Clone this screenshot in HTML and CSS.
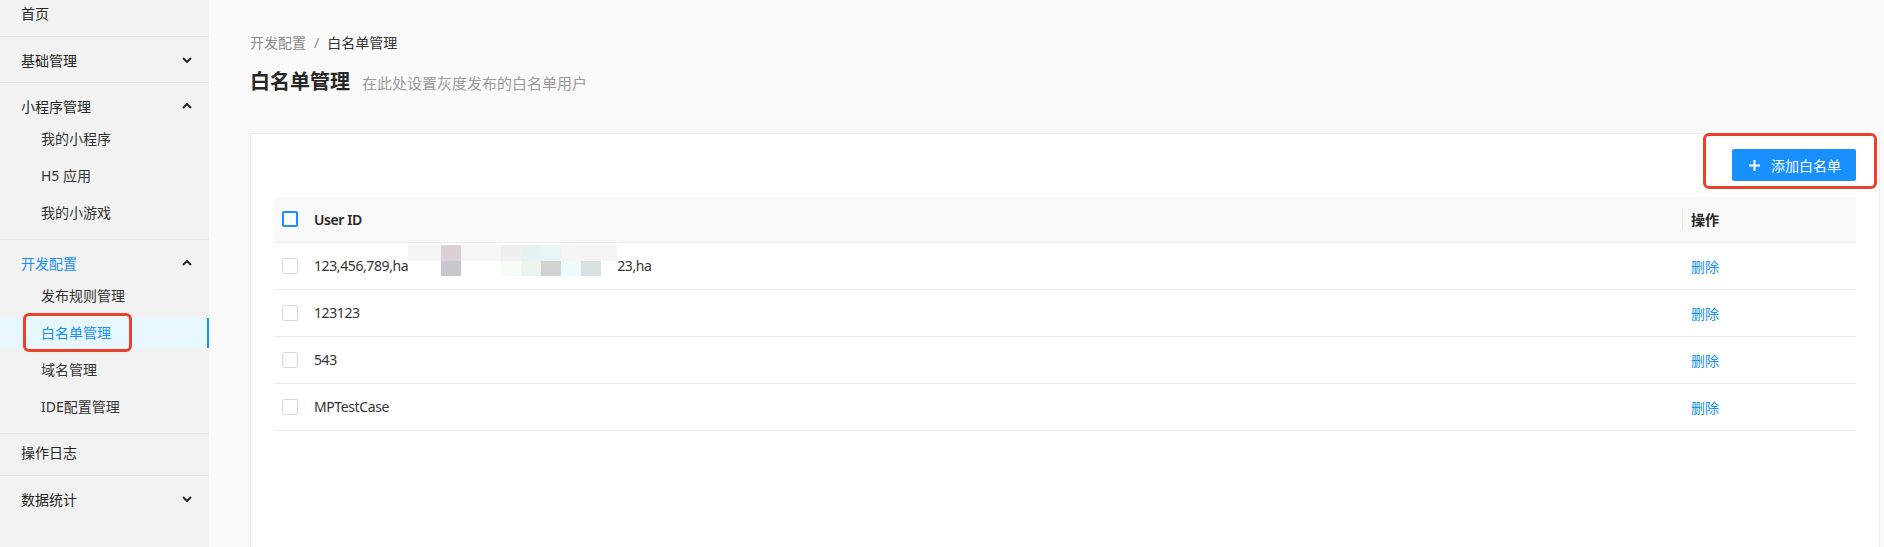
FILE: index.html
```html
<!DOCTYPE html>
<html lang="zh-CN">
<head>
    <meta charset="UTF-8">
    <meta name="viewport" content="width=device-width, initial-scale=1.0">
    <title>白名单管理</title>
    <link rel="stylesheet" href="styles.css">
</head>
<body>
<div class="layout">
    <aside class="sider">
        <ul class="menu">
            <li class="menu-item">首页</li>
            <li class="submenu">
                <div class="submenu-title">基础管理
                    <svg class="arrow" width="10" height="6" viewBox="0 0 10 6"><path d="M1 1l4 4 4-4"/></svg>
                </div>
            </li>
            <li class="submenu open">
                <div class="submenu-title">小程序管理
                    <svg class="arrow" width="10" height="6" viewBox="0 0 10 6"><path d="M1 5l4-4 4 4"/></svg>
                </div>
                <ul class="sub">
                    <li>我的小程序</li>
                    <li>H5 应用</li>
                    <li>我的小游戏</li>
                </ul>
            </li>
            <li class="submenu open active">
                <div class="submenu-title">开发配置
                    <svg class="arrow" width="10" height="6" viewBox="0 0 10 6"><path d="M1 5l4-4 4 4"/></svg>
                </div>
                <ul class="sub">
                    <li>发布规则管理</li>
                    <li class="selected">白名单管理<span class="mark mark-side"></span></li>
                    <li>域名管理</li>
                    <li>IDE配置管理</li>
                </ul>
            </li>
            <li class="menu-item">操作日志</li>
            <li class="submenu last">
                <div class="submenu-title">数据统计
                    <svg class="arrow" width="10" height="6" viewBox="0 0 10 6"><path d="M1 1l4 4 4-4"/></svg>
                </div>
            </li>
        </ul>
    </aside>

    <main class="content">
        <div class="breadcrumb">
            <span>开发配置</span><span class="sep">/</span><span class="current">白名单管理</span>
        </div>
        <div class="page-header">
            <h1>白名单管理</h1>
            <span class="desc">在此处设置灰度发布的白名单用户</span>
        </div>

        <div class="card">
            <div class="toolbar">
                <div class="btn-wrap">
                    <button class="btn-primary">
                        <svg width="11" height="11" viewBox="0 0 11 11"><path d="M5.5 0v11M0 5.5h11"/></svg>
                        添加白名单
                    </button>
                    <span class="mark mark-btn"></span>
                </div>
            </div>

            <table>
                <thead>
                    <tr>
                        <th class="col-check"><span class="checkbox head"></span></th>
                        <th>User ID</th>
                        <th class="col-op">操作</th>
                    </tr>
                </thead>
                <tbody>
                    <tr>
                        <td class="col-check"><span class="checkbox"></span></td>
                        <td>
                            <div class="uid">123,456,789,ha<span class="mosaic">
                                <i></i><i></i><i></i><i></i><i></i><i></i><i></i><i></i><i></i>
                                <i></i><i></i><i></i><i></i><i></i><i></i><i></i><i></i><i></i>
                            </span>23,ha</div>
                        </td>
                        <td class="col-op"><a href="#">删除</a></td>
                    </tr>
                    <tr>
                        <td class="col-check"><span class="checkbox"></span></td>
                        <td>123123</td>
                        <td class="col-op"><a href="#">删除</a></td>
                    </tr>
                    <tr>
                        <td class="col-check"><span class="checkbox"></span></td>
                        <td>543</td>
                        <td class="col-op"><a href="#">删除</a></td>
                    </tr>
                    <tr>
                        <td class="col-check"><span class="checkbox"></span></td>
                        <td>MPTestCase</td>
                        <td class="col-op"><a href="#">删除</a></td>
                    </tr>
                </tbody>
            </table>
        </div>
    </main>
</div>
</body>
</html>
```

FILE: styles.css
```css
* {
    box-sizing: border-box;
}

body {
    font-family: 'Noto Sans', 'Noto Sans CJK SC', sans-serif;
    margin: 0;
    font-size: 14px;
    color: #333;
    background-color: #fafafa;
}

ul {
    list-style: none;
    margin: 0;
    padding: 0;
}

.layout {
    display: flex;
    height: 547px;
    overflow: hidden;
}

/* sidebar */
.sider {
    width: 209px;
    flex-shrink: 0;
    background-color: #f2f2f2;
}
.menu {
    margin-top: -5px;
}
.menu > li {
    border-bottom: 1px solid #e5e5e5;
}
.menu > li.last {
    border-bottom: none;
}
.menu-item {
    height: 42px;
    line-height: 38px;
    padding-left: 21px;
    color: #262626;
}
.submenu-title {
    display: flex;
    align-items: center;
    justify-content: space-between;
    height: 45px;
    padding: 0 17px 0 21px;
    color: #262626;
}
.submenu.open .submenu-title {
    height: 41px;
    padding-top: 5px;
}
.submenu.active .submenu-title {
    color: #1890ff;
}
.arrow path {
    fill: none;
    stroke: #262626;
    stroke-width: 2;
}
.sub {
    padding-bottom: 4px;
}
.sub li {
    position: relative;
    height: 30px;
    line-height: 30px;
    margin-bottom: 7px;
    padding-left: 41px;
    color: #333;
}
.sub li.selected {
    background-color: #e6f7ff;
    border-right: 2px solid #1890ff;
    color: #1890ff;
}

/* red annotation boxes */
.mark {
    position: absolute;
    border: 3px solid #e5432e;
    border-radius: 6px;
    pointer-events: none;
}
.mark-side {
    top: -5px;
    bottom: -4px;
    left: 23px;
    width: 109px;
}
.mark-btn {
    top: -16px;
    bottom: -8px;
    left: -29px;
    right: -21px;
}

/* main */
.content {
    flex: 1;
    padding: 32px 4px 0 41px;
    background-color: #fafafa;
}
.breadcrumb {
    line-height: 22px;
    color: #8c8c8c;
}
.breadcrumb .sep {
    margin: 0 8px;
}
.breadcrumb .current {
    color: #333;
}
.page-header {
    display: flex;
    align-items: baseline;
    margin-top: 14px;
}
.page-header h1 {
    margin: 0;
    font-size: 20px;
    line-height: 28px;
    font-weight: 700;
    color: #262626;
}
.page-header .desc {
    margin-left: 12px;
    font-size: 15px;
    color: #9b9b9b;
}

.card {
    margin-top: 37px;
    min-height: 500px;
    padding: 15px 23px;
    background-color: #fff;
    border: 1px solid #ebebeb;
}
.toolbar {
    display: flex;
    justify-content: flex-end;
}
.btn-wrap {
    position: relative;
}
.btn-primary {
    display: flex;
    align-items: center;
    gap: 11px;
    height: 32px;
    padding: 0 15px 0 17px;
    border: none;
    border-radius: 2px;
    background-color: #1890ff;
    color: #fff;
    font-family: inherit;
    font-size: 14px;
}
.btn-primary path {
    stroke: #fff;
    stroke-width: 2;
}

/* table */
table {
    width: 100%;
    margin-top: 16px;
    border-collapse: collapse;
}
th, td {
    height: 47px;
    padding: 0;
    text-align: left;
    letter-spacing: -0.4px;
    border-bottom: 1px solid #ebebeb;
}
th {
    height: 45px;
    background-color: #f9f9f9;
    font-weight: 600;
    color: #262626;
}
.col-check {
    width: 40px;
    padding: 0 16px 0 8px;
    line-height: 0;
}
.col-op {
    position: relative;
    width: 174px;
    padding-left: 9px;
    letter-spacing: 0;
}
th.col-op::before {
    content: "";
    position: absolute;
    left: 0;
    top: 11px;
    width: 1px;
    height: 22px;
    background-color: #e8e8e8;
}
.col-op a {
    color: #1890ff;
    text-decoration: none;
}
.checkbox {
    display: inline-block;
    width: 16px;
    height: 16px;
    border: 1px solid #d9d9d9;
    border-radius: 2px;
    background-color: #fff;
}
.checkbox.head {
    border: 2px solid #1890ff;
}

/* blurred id */
.uid {
    display: flex;
    align-items: center;
}
.mosaic {
    display: grid;
    grid-template-columns: 33px 20px 40px 20px 20px 20px 20px 20px 16px;
    grid-template-rows: 16px 15px;
    margin-bottom: 11px;
}
.mosaic i:nth-child(1) { background: #f5f5f5; }
.mosaic i:nth-child(2) { background: #dccfd8; }
.mosaic i:nth-child(3) { background: #f6f6f6; }
.mosaic i:nth-child(4) { background: #f0f0f0; }
.mosaic i:nth-child(5) { background: #e6f2f2; }
.mosaic i:nth-child(6) { background: #e9f6f6; }
.mosaic i:nth-child(7),
.mosaic i:nth-child(8),
.mosaic i:nth-child(9) { background: #f5f5f5; }
.mosaic i:nth-child(10) { background: #fff; }
.mosaic i:nth-child(11) { background: #c9c6cd; }
.mosaic i:nth-child(12) { background: #fff; }
.mosaic i:nth-child(13) { background: #f4fcf4; }
.mosaic i:nth-child(14) { background: #ebf4ef; }
.mosaic i:nth-child(15) { background: #d4d2d0; }
.mosaic i:nth-child(16) { background: #edfdfd; }
.mosaic i:nth-child(17) { background: #d8e1e2; }
.mosaic i:nth-child(18) { background: #fff; }
```
